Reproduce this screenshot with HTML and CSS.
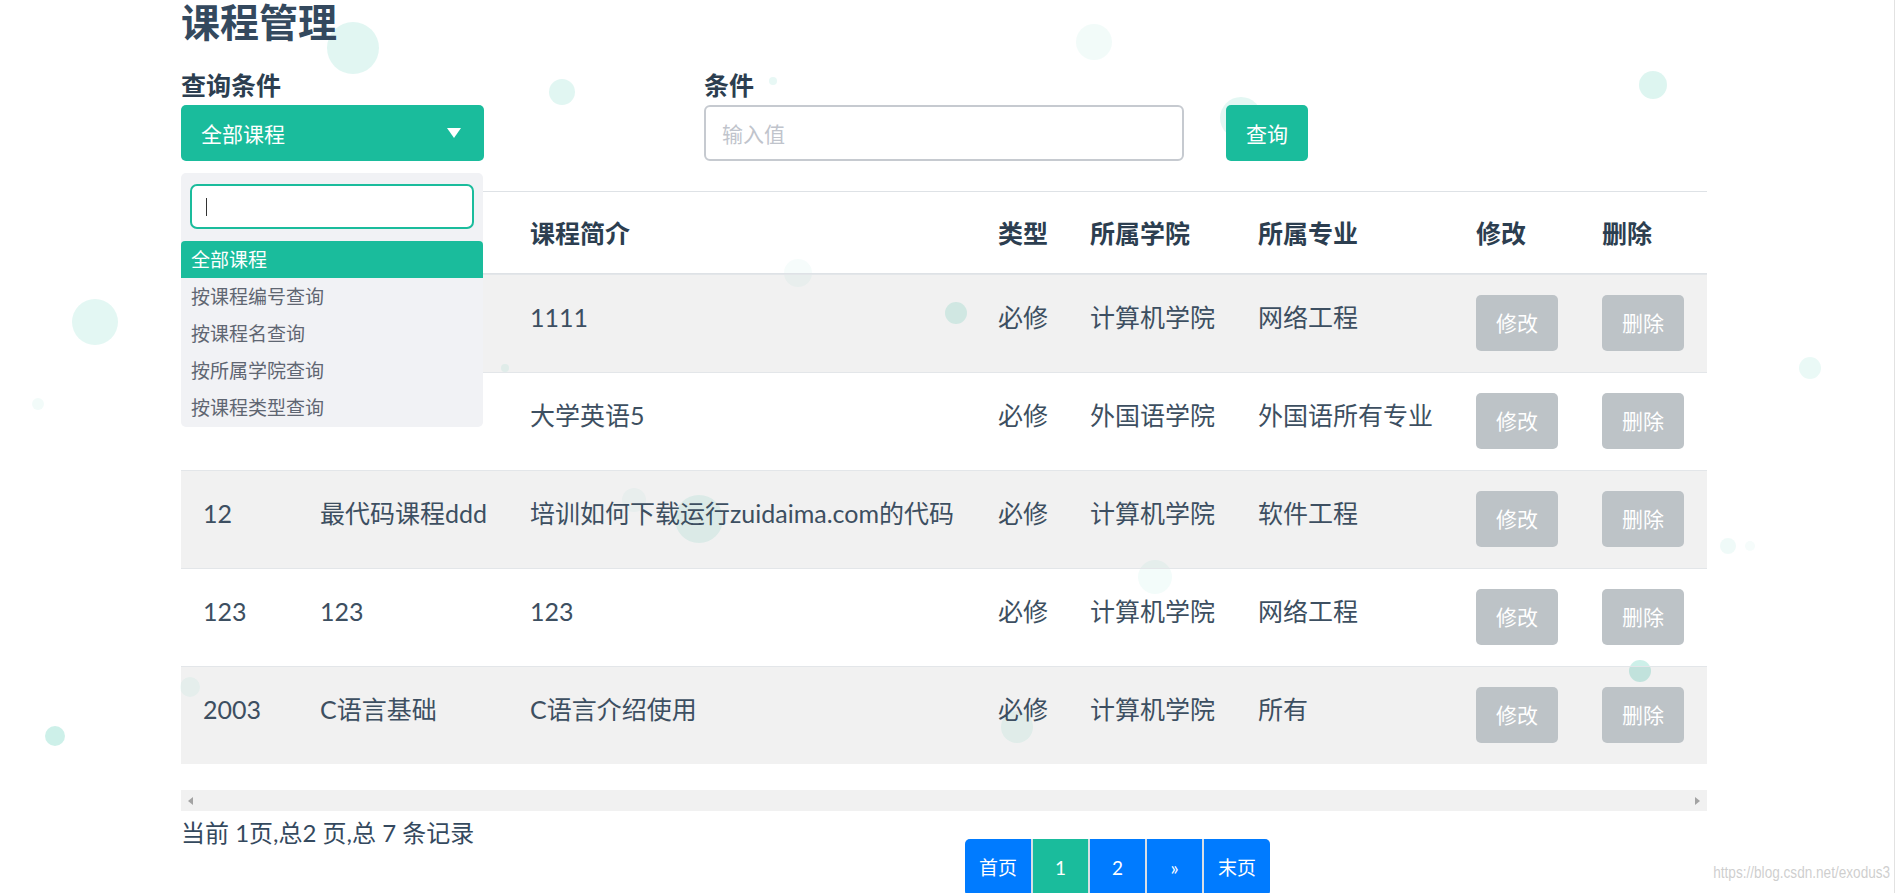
FILE: index.html
```html
<!DOCTYPE html>
<html lang="zh-CN">
<head>
<meta charset="utf-8">
<title>课程管理</title>
<link rel="stylesheet" href="styles.css">
</head>
<body>
<div class="frame">
  <div class="bubbles" aria-hidden="true">
    <span class="b b1"></span><span class="b b2"></span><span class="b b3"></span>
    <span class="b b4"></span><span class="b b5"></span><span class="b b6"></span>
    <span class="b b7"></span><span class="b b8"></span><span class="b b9"></span>
    <span class="b b10"></span><span class="b b11"></span><span class="b b12"></span>
    <span class="b b13"></span><span class="b b14"></span><span class="b b15"></span>
    <span class="b b16"></span><span class="b b17"></span><span class="b b18"></span>
    <span class="b b19"></span><span class="b b20"></span><span class="b b21"></span>
  </div>

  <main class="page">
    <h1 class="title">课程管理</h1>

    <div class="filters">
      <div class="field field-select">
        <div class="label">查询条件</div>
        <div class="select"><span>全部课程</span><i class="tri"></i></div>
        <div class="dropdown">
          <div class="dd-search"><span class="dd-cursor"></span></div>
          <ul class="dd-list">
            <li class="on">全部课程</li>
            <li>按课程编号查询</li>
            <li>按课程名查询</li>
            <li>按所属学院查询</li>
            <li>按课程类型查询</li>
          </ul>
        </div>
      </div>
      <div class="field field-input">
        <div class="label">条件</div>
        <input class="input" type="text" placeholder="输入值">
      </div>
      <button class="btn-search" type="button">查询</button>
    </div>

    <table class="grid">
      <colgroup>
        <col class="c-id"><col class="c-name"><col class="c-desc"><col class="c-type">
        <col class="c-college"><col class="c-major"><col class="c-edit"><col class="c-del">
      </colgroup>
      <thead>
        <tr>
          <th>课程编号</th><th>课程名</th><th>课程简介</th><th>类型</th>
          <th>所属学院</th><th>所属专业</th><th>修改</th><th>删除</th>
        </tr>
      </thead>
      <tbody>
        <tr>
          <td>11</td><td>1111</td><td>1111</td><td>必修</td><td>计算机学院</td><td>网络工程</td>
          <td><button class="btn-gray" type="button">修改</button></td>
          <td><button class="btn-gray" type="button">删除</button></td>
        </tr>
        <tr>
          <td>10</td><td>1005</td><td>大学英语5</td><td>必修</td><td>外国语学院</td><td>外国语所有专业</td>
          <td><button class="btn-gray" type="button">修改</button></td>
          <td><button class="btn-gray" type="button">删除</button></td>
        </tr>
        <tr>
          <td>12</td><td>最代码课程ddd</td><td>培训如何下载运行zuidaima.com的代码</td><td>必修</td><td>计算机学院</td><td>软件工程</td>
          <td><button class="btn-gray" type="button">修改</button></td>
          <td><button class="btn-gray" type="button">删除</button></td>
        </tr>
        <tr>
          <td>123</td><td>123</td><td>123</td><td>必修</td><td>计算机学院</td><td>网络工程</td>
          <td><button class="btn-gray" type="button">修改</button></td>
          <td><button class="btn-gray" type="button">删除</button></td>
        </tr>
        <tr>
          <td>2003</td><td>C语言基础</td><td>C语言介绍使用</td><td>必修</td><td>计算机学院</td><td>所有</td>
          <td><button class="btn-gray" type="button">修改</button></td>
          <td><button class="btn-gray" type="button">删除</button></td>
        </tr>
      </tbody>
    </table>

    <div class="hscroll"><i class="arrow-l"></i><i class="arrow-r"></i></div>

    <div class="footer">
      <div class="summary">当前 1页,总2 页,总 7 条记录</div>
      <ul class="pager">
        <li class="wide"><a href="#">首页</a></li>
        <li class="active"><a href="#">1</a></li>
        <li><a href="#">2</a></li>
        <li><a href="#">»</a></li>
        <li class="wide"><a href="#">末页</a></li>
      </ul>
    </div>
  </main>

  <div class="watermark">https://blog.csdn.net/exodus3</div>
</div>
</body>
</html>
```

FILE: styles.css
```css
* { box-sizing: border-box; }

html, body {
  margin: 0;
  padding: 0;
  overflow: hidden;
  background: #fff;
}

body {
  font-family: Lato, "Noto Sans CJK SC", sans-serif;
  color: #34495e;
}

.frame {
  position: relative;
  width: 1895px;
  height: 893px;
  border-right: 1px solid #e2e2e2;
  overflow: hidden;
}

/* decorative particle layer */
.bubbles {
  position: absolute;
  inset: 0;
  z-index: 0;
  pointer-events: none;
}
.b { position: absolute; border-radius: 50%; background: #1abc9c; }
.b1  { left: 327px;  top: 22px;  width: 52px; height: 52px; opacity: .13; }
.b2  { left: 549px;  top: 79px;  width: 26px; height: 26px; opacity: .13; }
.b3  { left: 1076px; top: 24px;  width: 36px; height: 36px; opacity: .06; }
.b4  { left: 1639px; top: 71px;  width: 28px; height: 28px; opacity: .15; }
.b5  { left: 1220px; top: 97px;  width: 42px; height: 42px; opacity: .12; }
.b6  { left: 72px;   top: 299px; width: 46px; height: 46px; opacity: .12; }
.b7  { left: 32px;   top: 398px; width: 12px; height: 12px; opacity: .06; }
.b8  { left: 45px;   top: 726px; width: 20px; height: 20px; opacity: .22; }
.b9  { left: 945px;  top: 302px; width: 22px; height: 22px; opacity: .15; }
.b10 { left: 1799px; top: 357px; width: 22px; height: 22px; opacity: .09; }
.b11 { left: 1720px; top: 538px; width: 16px; height: 16px; opacity: .07; }
.b12 { left: 1745px; top: 541px; width: 10px; height: 10px; opacity: .04; }
.b13 { left: 1629px; top: 660px; width: 22px; height: 22px; opacity: .22; }
.b14 { left: 1138px; top: 560px; width: 34px; height: 34px; opacity: .05; }
.b15 { left: 1001px; top: 711px; width: 32px; height: 32px; opacity: .08; }
.b16 { left: 675px;  top: 495px; width: 48px; height: 48px; opacity: .10; }
.b17 { left: 622px;  top: 488px; width: 24px; height: 24px; opacity: .04; }
.b18 { left: 180px;  top: 677px; width: 20px; height: 20px; opacity: .05; }
.b19 { left: 784px;  top: 259px; width: 28px; height: 28px; opacity: .04; }
.b20 { left: 501px;  top: 364px; width: 8px;  height: 8px;  opacity: .08; }
.b21 { left: 769px;  top: 77px;  width: 8px;  height: 8px;  opacity: .10; }

.page {
  position: relative;
  z-index: 1;
  width: 1707px;
  padding-left: 181px;
}

.title {
  margin: 0 0 26px;
  font-size: 39px;
  line-height: 44px;
  font-weight: 700;
  color: #34495e;
}

/* filters */
.filters {
  display: flex;
  align-items: flex-end;
}
.field {
  display: flex;
  flex-direction: column;
}
.field-select {
  position: relative;
  width: 303px;
}
.field-input {
  width: 480px;
  margin-left: 220px;
}
.label {
  font-size: 25px;
  font-weight: 700;
  line-height: 30px;
  margin-bottom: 5px;
  color: #2c3e50;
}
.select {
  height: 56px;
  background: #1abc9c;
  border-radius: 5px;
  color: #fff;
  font-size: 21px;
  display: flex;
  align-items: center;
  justify-content: space-between;
  padding: 0 23px 0 20px;
}
.tri {
  width: 0;
  height: 0;
  border-left: 7px solid transparent;
  border-right: 7px solid transparent;
  border-top: 10px solid #fff;
}
.input {
  height: 56px;
  width: 100%;
  border: 2px solid #c6cad0;
  border-radius: 6px;
  background: #fff;
  padding: 0 16px;
  font-family: inherit;
  font-size: 21px;
  color: #34495e;
  outline: none;
}
.input::placeholder { color: #c0c4cc; }
.btn-search {
  margin-left: 42px;
  width: 82px;
  height: 56px;
  padding: 0;
  background: #1abc9c;
  border: 0;
  border-radius: 5px;
  color: #fff;
  font-family: inherit;
  font-size: 21px;
}

/* dropdown overlay */
.dropdown {
  position: absolute;
  top: calc(100% + 12px);
  left: 0;
  width: 302px;
  height: 254px;
  background: #f1f2f5;
  border-radius: 5px;
  padding-top: 11px;
  z-index: 5;
}
.dd-search {
  margin: 0 9px 12px;
  height: 45px;
  border: 2px solid #1abc9c;
  border-radius: 7px;
  background: #fff;
  display: flex;
  align-items: center;
  padding-left: 14px;
}
.dd-cursor {
  width: 1px;
  height: 18px;
  background: #333;
}
.dd-list {
  list-style: none;
  margin: 0;
  padding: 0;
}
.dd-list li {
  height: 37px;
  line-height: 37px;
  padding-left: 10px;
  font-size: 19px;
  color: #5f6672;
}
.dd-list li.on {
  background: #1abc9c;
  color: #fff;
  border-radius: 4px 4px 0 0;
}

/* table */
.grid {
  width: 1526px;
  margin-top: 30px;
  table-layout: fixed;
  border-collapse: separate;
  border-spacing: 0;
}
.c-id { width: 117px; }
.c-name { width: 210px; }
.c-desc { width: 468px; }
.c-type { width: 92px; }
.c-college { width: 168px; }
.c-major { width: 218px; }
.c-edit { width: 126px; }
.c-del { width: 127px; }

.grid th {
  font-size: 25px;
  font-weight: 700;
  line-height: 42px;
  padding: 20px 22px 19px;
  text-align: left;
  color: #2c3e50;
  white-space: nowrap;
  border-top: 1px solid #dee2e6;
  border-bottom: 1px solid #dee2e6;
}
.grid td {
  font-size: 25px;
  line-height: 44px;
  padding: 20px 22px 21px;
  color: #3d4f61;
  white-space: nowrap;
  vertical-align: top;
  border-top: 1px solid #e3e6e9;
}
.grid tbody tr:nth-child(odd) td {
  background: rgba(0, 0, 0, .055);
}
.btn-gray {
  display: block;
  width: 82px;
  height: 56px;
  padding: 0;
  border: 0;
  border-radius: 5px;
  background: #bdc3c7;
  color: #fff;
  font-family: inherit;
  font-size: 21px;
  line-height: 56px;
}

/* fake horizontal scrollbar */
.hscroll {
  margin-top: 26px;
  height: 21px;
  background: #f1f1f1;
  display: flex;
  align-items: center;
  justify-content: space-between;
  padding: 0 7px;
}
.arrow-l, .arrow-r {
  width: 0;
  height: 0;
  border-top: 4px solid transparent;
  border-bottom: 4px solid transparent;
}
.arrow-l { border-right: 5px solid #a3a3a3; }
.arrow-r { border-left: 5px solid #a3a3a3; }

/* footer */
.footer {
  display: flex;
  align-items: flex-start;
}
.summary {
  flex: 0 0 763px;
  font-size: 24px;
  line-height: 44px;
  color: #34495e;
}
.pager {
  display: flex;
  gap: 2px;
  margin: 28px 0 0 21px;
  padding: 0;
  list-style: none;
  background: #d8dee5;
  border-radius: 5px;
  overflow: hidden;
}
.pager a {
  display: block;
  width: 55px;
  height: 57px;
  line-height: 57px;
  text-align: center;
  background: #007bff;
  color: #fff;
  font-size: 19px;
  text-decoration: none;
}
.pager .wide a { width: 66px; }
.pager .active a { background: #1abc9c; }

.watermark {
  position: absolute;
  right: 4px;
  bottom: 10px;
  z-index: 2;
  font-family: "Liberation Sans", Arial, sans-serif;
  font-size: 17px;
  line-height: 20px;
  color: rgba(190, 190, 190, .75);
  transform: scaleX(.8);
  transform-origin: right center;
}
```
